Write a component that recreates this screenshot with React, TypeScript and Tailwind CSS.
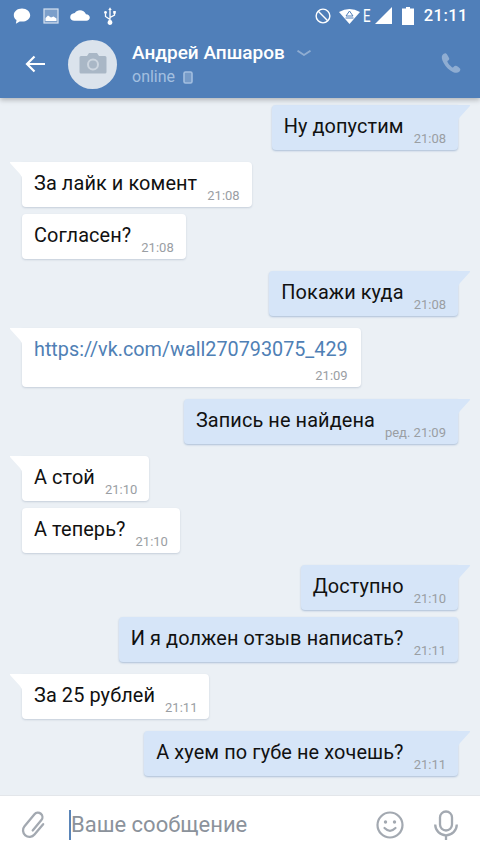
type Msg = {
  text: string;
  time: string;
  out?: boolean;
  tail?: boolean;
  link?: boolean;
  gap: string;
};

const messages: Msg[] = [
  { text: "Ну допустим", time: "21:08", out: true, tail: true, gap: "mt-[7px]" },
  { text: "За лайк и комент", time: "21:08", tail: true, gap: "mt-[12px]" },
  { text: "Согласен?", time: "21:08", gap: "mt-[7px]" },
  { text: "Покажи куда", time: "21:08", out: true, tail: true, gap: "mt-[12px]" },
  { text: "https://vk.com/wall270793075_429", time: "21:09", tail: true, link: true, gap: "mt-[12px]" },
  { text: "Запись не найдена", time: "ред. 21:09", out: true, tail: true, gap: "mt-[12px]" },
  { text: "А стой", time: "21:10", tail: true, gap: "mt-[12px]" },
  { text: "А теперь?", time: "21:10", gap: "mt-[7px]" },
  { text: "Доступно", time: "21:10", out: true, tail: true, gap: "mt-[12px]" },
  { text: "И я должен отзыв написать?", time: "21:11", out: true, gap: "mt-[7px]" },
  { text: "За 25 рублей", time: "21:11", tail: true, gap: "mt-[12px]" },
  { text: "А хуем по губе не хочешь?", time: "21:11", out: true, tail: true, gap: "mt-[12px]" },
];

function Tail({ out }: { out?: boolean }) {
  if (out) {
    return (
      <svg className="absolute -right-[13px] top-0" width="14" height="26" viewBox="0 0 14 26">
        <path d="M0 0H12.5Q13.5 0 13 1L3 12Q1 14 1 18V26H0Z" fill="#d6e5f8" />
      </svg>
    );
  }
  return (
    <svg className="absolute -left-[13px] top-0" width="14" height="26" viewBox="0 0 14 26">
      <path d="M14 0H1.5Q0.5 0 1 1L11 12Q13 14 13 18V26H14Z" fill="#ffffff" />
    </svg>
  );
}

function Bubble({ msg }: { msg: Msg }) {
  const side = msg.out ? "justify-end pr-[22px]" : "justify-start pl-[22px]";
  const color = msg.out ? "bg-[#d6e5f8] shadow-[0_1px_2px_rgba(80,120,170,0.4)]" : "bg-white shadow-[0_1px_2px_rgba(90,110,140,0.25)]";
  const corner = !msg.tail ? "rounded-[4px]" : msg.out ? "rounded-[4px] rounded-tr-none" : "rounded-[4px] rounded-tl-none";

  return (
    <div className={`flex ${side} ${msg.gap}`}>
      <div className={`relative ${color} ${corner}`}>
        {msg.tail && <Tail out={msg.out} />}
        {msg.link ? (
          <div className="flex h-[59px] flex-col pl-[12px] pr-[13px] pt-[9px]">
            <span className="text-[19.8px] leading-[26px] text-[#4f80b5]">{msg.text}</span>
            <span className="mt-[6px] self-end text-[13px] leading-[14px] text-[#9a9ea3]">{msg.time}</span>
          </div>
        ) : (
          <div className="flex h-[45px] items-start pl-[12px] pr-[12px] pt-[9px]">
            <span className="text-[19.9px] leading-[26px] tracking-[0.1px] text-[#111111]">{msg.text}</span>
            <span className="ml-[10px] mt-[17px] text-[13px] leading-[16px] text-[#9a9ea3]">{msg.time}</span>
          </div>
        )}
      </div>
    </div>
  );
}

function StatusBar() {
  return (
    <div className="flex h-[30px] items-center justify-between pl-[13px] pr-[12px] pt-[1px] text-white">
      <div className="flex items-center">
        <svg width="18" height="18" viewBox="0 0 18 18" fill="#fff">
          <path d="M9 1.500C4.300 1.500.8 4.400.8 8.200c0 2 1 3.700 2.700 4.900l-.6 3.600 3.800-2.300c.7.1 1.500.2 2.300.2 4.700 0 8.200-2.800 8.200-6.400S13.700 1.500 9 1.500z" />
        </svg>
        <svg className="ml-[12px]" width="16" height="16" viewBox="0 0 16 16" fill="none">
          <rect x="1" y="1" width="14" height="14" fill="#fff" fillOpacity="0.25" stroke="#d5e1f0" strokeWidth="1.2" />
          <path d="M2.500 13V10L5 7.500 8 9.500 10.500 8.500 13.500 10.500V13Z" fill="#fff" />
        </svg>
        <svg className="ml-[11px]" width="20" height="11" viewBox="0 0 20 11" fill="#fff">
          <path d="M16 4.300C14.800 1.800 12.600.3 10 .3 7.800.3 6 1.300 4.800 3 2.200 3.200.2 4.800.2 7.200.2 9.300 2 10.800 4.300 10.800h12C18.400 10.800 19.800 9.500 19.800 7.600 19.800 5.800 18.200 4.500 16 4.300z" />
        </svg>
        <svg className="ml-[13px]" width="14" height="18" viewBox="0 0 14 18" fill="none" stroke="#fff" strokeWidth="1.300">
          <path d="M7 2V15M7 12.500L2.500 9.500V6.500M7 10.500L11.500 8V6" />
          <circle cx="7" cy="15.500" r="1.800" fill="#fff" />
          <path d="M7 .3L5.300 3H8.700Z" fill="#fff" stroke="none" />
          <circle cx="2.500" cy="5.500" r="1.400" fill="#fff" stroke="none" />
          <rect x="10.200" y="4" width="2.600" height="2.600" fill="#fff" stroke="none" />
        </svg>
      </div>
      <div className="flex items-center">
        <svg width="16" height="16" viewBox="0 0 17 17" fill="none" stroke="#fff" strokeWidth="1.500">
          <circle cx="8.500" cy="8.500" r="7.300" />
          <path d="M3.500 3.500L13.500 13.500" />
        </svg>
        <svg className="ml-[8px]" width="21" height="16" viewBox="0 0 21 16">
          <path d="M0 4Q10.500 -2 21 4L10.500 16Z" fill="#fff" />
          <path d="M10.500 3L14 8H7Z" fill="none" stroke="#507fb9" strokeWidth="1" />
          <path d="M6.500 10H14.500" stroke="#507fb9" strokeWidth="1" />
        </svg>
        <span className="ml-[3px] inline-block w-[8px] origin-left scale-x-[0.7] text-[19px] font-normal leading-[18px]">E</span>
        <svg className="ml-[4px]" width="17" height="17" viewBox="0 0 17 17" fill="#fff">
          <path d="M17 0V17H0Z" />
        </svg>
        <svg className="ml-[10px]" width="12" height="18" viewBox="0 0 12 18" fill="#fff">
          <path d="M4 0H8V1.500H12V18H0V1.500H4Z" />
        </svg>
        <span className="ml-[10px] text-[16.5px] font-medium leading-[18px] tracking-[0.5px]">21:11</span>
      </div>
    </div>
  );
}

export default function App() {
  return (
    <div className="flex h-[854px] w-[480px] flex-col overflow-hidden bg-[#ebf0f5] font-['Roboto',sans-serif]">
      <header className="relative z-10 h-[98px] bg-[#507fb9] shadow-[0_2px_5px_rgba(0,0,0,0.25)]">
        <StatusBar />
        <div className="flex h-[68px] items-center">
          <svg className="ml-[25px]" width="20" height="18" viewBox="0 0 20 18" fill="none" stroke="#fff" strokeWidth="2.200">
            <path d="M20 9H2M9.500 1.500L2 9L9.500 16.500" />
          </svg>
          <div className="ml-[23px] flex h-[49px] w-[49px] items-center justify-center rounded-full bg-[#dbe3ec]">
            <svg width="28" height="24" viewBox="0 0 28 24">
              <path d="M2 4H8L10 1H18L20 4H26A1.500 1.500 0 0 1 27.500 5.500V20A1.500 1.500 0 0 1 26 21.500H2A1.500 1.500 0 0 1 .5 20V5.500A1.500 1.500 0 0 1 2 4Z" fill="#a9b7c6" />
              <circle cx="14" cy="12.500" r="5" fill="none" stroke="#cdd6e0" strokeWidth="2" />
            </svg>
          </div>
          <div className="ml-[15px] mt-[1px] flex flex-col">
            <div className="flex items-center">
              <span className="text-[19px] font-medium leading-[22px] text-white">Андрей Апшаров</span>
              <svg className="ml-[12px]" width="14" height="6" viewBox="0 0 14 6" fill="none" stroke="#8fadd2" strokeWidth="1.800">
                <path d="M.5 .7L7 5L13.500 .7" />
              </svg>
            </div>
            <div className="mt-[3px] flex items-center">
              <span className="text-[16px] leading-[20px] text-[#a3bfe0]">online</span>
              <svg className="ml-[8px]" width="10" height="13" viewBox="0 0 10 13" fill="none">
                <rect x="1" y="1" width="8" height="11" rx="1.500" fill="#8fadd2" fillOpacity="0.6" stroke="#a3bfe0" strokeWidth="1.600" />
              </svg>
            </div>
          </div>
          <svg className="ml-auto mr-[18px] mt-[-2px]" width="22" height="22" viewBox="0 0 24 24" fill="#8fadd2">
            <path d="M6.600 1.500C5.500 1 3.500 2 2.500 3.500 1.500 5 1.800 8 4 12c2.500 4.500 6 8 10.500 10 2.500 1 5 1 6.500-.5 1-1 1.500-2.500 1-3.300-.7-1-3-2.700-4.500-3.200-1-.3-1.800.3-2.500 1.200-.5.700-1.200.8-2 .3-1.800-1.200-3.500-3-4.700-5.200-.4-.8-.3-1.400.5-1.900 1-.7 1.500-1.500 1.200-2.600C9.500 5.500 7.700 2 6.600 1.500Z" />
          </svg>
        </div>
      </header>

      <main className="min-h-0 flex-1">
        {messages.map((m) => (
          <Bubble key={m.text} msg={m} />
        ))}
      </main>

      <footer className="flex h-[59px] items-center border-t border-[#e3e6ea] bg-white">
        <svg className="ml-[20px]" width="28" height="30" viewBox="0 0 28 30" fill="none" stroke="#a3a9b1" strokeWidth="2.300" strokeLinecap="round">
          <path transform="rotate(40 14 15)" d="M20.500 8.500V22A6.500 6.500 0 0 1 7.500 22V6.500A4.500 4.500 0 0 1 16.500 6.500V20" />
        </svg>
        <div className="ml-[21px] flex items-center">
          <span className="h-[30px] w-[2px] bg-[#5a85b8]" />
          <span className="text-[22px] leading-[26px] text-[#8b929b]">Ваше сообщение</span>
        </div>
        <svg className="ml-auto" width="28" height="28" viewBox="0 0 28 28" fill="none" stroke="#a3a9b1" strokeWidth="2.200" strokeLinecap="round">
          <circle cx="14" cy="14" r="12.500" />
          <circle cx="9.500" cy="11" r="1.700" fill="#a3a9b1" stroke="none" />
          <circle cx="18.500" cy="11" r="1.700" fill="#a3a9b1" stroke="none" />
          <path d="M8.500 17Q14 22.500 19.500 17" />
        </svg>
        <svg className="ml-[30px] mr-[22px]" width="24" height="30" viewBox="0 0 24 30" fill="none" stroke="#a3a9b1" strokeWidth="2.300">
          <rect x="6" y="1.500" width="12" height="19" rx="6" />
          <path d="M1.200 14.500A10.800 10.800 0 0 0 22.800 14.500" />
          <path d="M12 25V30" />
        </svg>
      </footer>
    </div>
  );
}
